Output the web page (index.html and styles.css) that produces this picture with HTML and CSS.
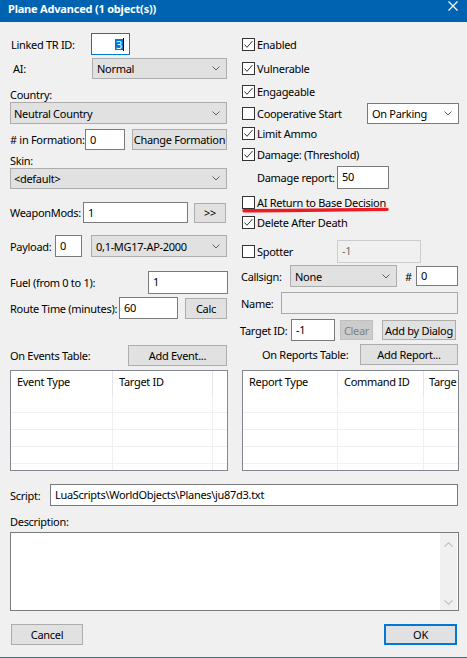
FILE: index.html
```html
<!DOCTYPE html>
<html>
<head>
<meta charset="utf-8">
<link rel="stylesheet" href="styles.css">
</head>
<body>
<div class="window">
  <div class="titlebar">
    <span class="title">Plane Advanced (1 object(s))</span>
    <svg class="close" viewBox="0 0 10 10"><path d="M0.5 0.5 L9.5 9.5 M9.5 0.5 L0.5 9.5" stroke="#fff" stroke-width="1.2" fill="none"/></svg>
  </div>

  <div class="main">
    <div class="col">
      <div class="row r-linked">
        <span class="lbl l-linked">Linked TR ID:</span>
        <div class="edit focus in-linked"><span class="hl">3</span><span class="caret"></span></div>
      </div>
      <div class="row r-ai">
        <span class="lbl l-ai">AI:</span>
        <div class="combo sel-ai"><span>Normal</span><svg class="chev" viewBox="0 0 8 5"><path d="M0.5 0.5 L4 4 L7.5 0.5" fill="none" stroke="#606060"/></svg></div>
      </div>
      <div class="cap cap-country">Country:</div>
      <div class="combo wide sel-country"><span>Neutral Country</span><svg class="chev" viewBox="0 0 8 5"><path d="M0.5 0.5 L4 4 L7.5 0.5" fill="none" stroke="#606060"/></svg></div>
      <div class="row r-form">
        <span class="lbl l-form"># in Formation:</span>
        <div class="edit in-form">0</div>
        <div class="btn btn-form">Change Formation</div>
      </div>
      <div class="cap cap-skin">Skin:</div>
      <div class="combo wide sel-skin"><span>&lt;default&gt;</span><svg class="chev" viewBox="0 0 8 5"><path d="M0.5 0.5 L4 4 L7.5 0.5" fill="none" stroke="#606060"/></svg></div>
      <div class="row r-wm">
        <span class="lbl l-wm">WeaponMods:</span>
        <div class="edit in-wm">1</div>
        <div class="btn btn-more">&gt;&gt;</div>
      </div>
      <div class="row r-pay">
        <span class="lbl l-pay">Payload:</span>
        <div class="edit in-pay">0</div>
        <div class="combo sel-pay"><span>0,1-MG17-AP-2000</span><svg class="chev" viewBox="0 0 8 5"><path d="M0.5 0.5 L4 4 L7.5 0.5" fill="none" stroke="#606060"/></svg></div>
      </div>
      <div class="row r-fuel">
        <span class="lbl grow">Fuel (from 0 to 1):</span>
        <div class="edit in-fuel">1</div>
      </div>
      <div class="row r-route">
        <span class="lbl l-route">Route Time (minutes):</span>
        <div class="edit in-route">60</div>
        <div class="btn btn-calc">Calc</div>
      </div>
      <div class="row r-events">
        <span class="lbl grow">On Events Table:</span>
        <div class="btn btn-addev">Add Event...</div>
      </div>
      <div class="table t-events">
        <div class="thead">
          <div class="th c-ev1">Event Type</div>
          <div class="th c-ev2">Target ID</div>
          <div class="th c-last"></div>
        </div>
        <div class="trow"><div class="td c-ev1"></div><div class="td c-ev2"></div><div class="td c-last"></div></div>
        <div class="trow"><div class="td c-ev1"></div><div class="td c-ev2"></div><div class="td c-last"></div></div>
        <div class="trow"><div class="td c-ev1"></div><div class="td c-ev2"></div><div class="td c-last"></div></div>
        <div class="trow"><div class="td c-ev1"></div><div class="td c-ev2"></div><div class="td c-last"></div></div>
        <div class="trow"><div class="td c-ev1"></div><div class="td c-ev2"></div><div class="td c-last"></div></div>
      </div>
    </div>

    <div class="col">
      <div class="cb-row cb1"><svg class="cbx" viewBox="0 0 13 13"><rect x="0.5" y="0.5" width="12" height="12" fill="#fff" stroke="#333"/><path d="M2.5 6.5 L5 9.3 L10.5 3" fill="none" stroke="#333"/></svg><span class="cbl">Enabled</span></div>
      <div class="cb-row cb2"><svg class="cbx" viewBox="0 0 13 13"><rect x="0.5" y="0.5" width="12" height="12" fill="#fff" stroke="#333"/><path d="M2.5 6.5 L5 9.3 L10.5 3" fill="none" stroke="#333"/></svg><span class="cbl">Vulnerable</span></div>
      <div class="cb-row cb3"><svg class="cbx" viewBox="0 0 13 13"><rect x="0.5" y="0.5" width="12" height="12" fill="#fff" stroke="#333"/><path d="M2.5 6.5 L5 9.3 L10.5 3" fill="none" stroke="#333"/></svg><span class="cbl">Engageable</span></div>
      <div class="cb-row r-coop"><svg class="cbx" viewBox="0 0 13 13"><rect x="0.5" y="0.5" width="12" height="12" fill="#fff" stroke="#333"/></svg><span class="cbl">Cooperative Start</span>
        <div class="combo white sel-coop"><span>On Parking</span><svg class="chev" viewBox="0 0 8 5"><path d="M0.5 0.5 L4 4 L7.5 0.5" fill="none" stroke="#606060"/></svg></div>
      </div>
      <div class="cb-row cb5"><svg class="cbx" viewBox="0 0 13 13"><rect x="0.5" y="0.5" width="12" height="12" fill="#fff" stroke="#333"/><path d="M2.5 6.5 L5 9.3 L10.5 3" fill="none" stroke="#333"/></svg><span class="cbl">Limit Ammo</span></div>
      <div class="cb-row cb6"><svg class="cbx" viewBox="0 0 13 13"><rect x="0.5" y="0.5" width="12" height="12" fill="#fff" stroke="#333"/><path d="M2.5 6.5 L5 9.3 L10.5 3" fill="none" stroke="#333"/></svg><span class="cbl">Damage: (Threshold)</span></div>
      <div class="row r-dmg">
        <span class="lbl l-dmg">Damage report:</span>
        <div class="edit in-dmg">50</div>
      </div>
      <div class="cb-row cb-ai">
        <svg class="cbx" viewBox="0 0 13 13"><rect x="0.5" y="0.5" width="12" height="12" fill="#fff" stroke="#333"/></svg><span class="cbl">AI Return to Base Decision</span>
        <svg class="redline" viewBox="0 0 150 8"><path d="M2 4.8 C 50 4.6, 100 4.2, 145 3.4" fill="none" stroke="#ec1c24" stroke-width="3.4" stroke-linecap="round"/></svg>
      </div>
      <div class="cb-row cb-del"><svg class="cbx" viewBox="0 0 13 13"><rect x="0.5" y="0.5" width="12" height="12" fill="#fff" stroke="#333"/><path d="M2.5 6.5 L5 9.3 L10.5 3" fill="none" stroke="#333"/></svg><span class="cbl">Delete After Death</span></div>
      <div class="cb-row r-spot">
        <span class="spot-l"><svg class="cbx" viewBox="0 0 13 13"><rect x="0.5" y="0.5" width="12" height="12" fill="#fff" stroke="#333"/></svg><span class="cbl">Spotter</span></span>
        <div class="edit disabled in-spot">-1</div>
      </div>
      <div class="row r-call">
        <span class="lbl l-call">Callsign:</span>
        <div class="combo sel-call"><span>None</span><svg class="chev" viewBox="0 0 8 5"><path d="M0.5 0.5 L4 4 L7.5 0.5" fill="none" stroke="#606060"/></svg></div>
        <span class="hash">#</span>
        <div class="edit in-num">0</div>
      </div>
      <div class="row r-name">
        <span class="lbl l-name">Name:</span>
        <div class="edit readonly in-name"></div>
      </div>
      <div class="row r-tid">
        <span class="lbl l-tid">Target ID:</span>
        <div class="edit in-tid">-1</div>
        <div class="btn dis btn-clear">Clear</div>
        <div class="btn btn-dialog">Add by Dialog</div>
      </div>
      <div class="row r-rep">
        <span class="lbl grow l-rep">On Reports Table:</span>
        <div class="btn btn-addrep">Add Report...</div>
      </div>
      <div class="table t-reports">
        <div class="thead">
          <div class="th c-rp1">Report Type</div>
          <div class="th c-rp2">Command ID</div>
          <div class="th c-last">Targe</div>
        </div>
        <div class="trow"><div class="td c-rp1"></div><div class="td c-rp2"></div><div class="td c-last"></div></div>
        <div class="trow"><div class="td c-rp1"></div><div class="td c-rp2"></div><div class="td c-last"></div></div>
        <div class="trow"><div class="td c-rp1"></div><div class="td c-rp2"></div><div class="td c-last"></div></div>
        <div class="trow"><div class="td c-rp1"></div><div class="td c-rp2"></div><div class="td c-last"></div></div>
        <div class="trow"><div class="td c-rp1"></div><div class="td c-rp2"></div><div class="td c-last"></div></div>
      </div>
    </div>
  </div>

  <div class="bottom">
    <div class="row r-script">
      <span class="lbl l-script">Script:</span>
      <div class="edit in-script">LuaScripts\WorldObjects\Planes\ju87d3.txt</div>
    </div>
    <div class="cap cap-desc">Description:</div>
    <div class="memo">
      <div class="memo-text"></div>
      <div class="vscroll">
        <svg class="sarrow" viewBox="0 0 9 5"><path d="M0.5 4.5 L4.5 0.8 L8.5 4.5" fill="none" stroke="#c0c0c0" stroke-width="1.2"/></svg>
        <svg class="sarrow" viewBox="0 0 9 5"><path d="M0.5 0.5 L4.5 4.2 L8.5 0.5" fill="none" stroke="#c0c0c0" stroke-width="1.2"/></svg>
      </div>
    </div>
    <div class="row r-btns">
      <div class="btn btn-cancel">Cancel</div>
      <div class="btn default btn-ok">OK</div>
    </div>
  </div>
</div>
</body>
</html>
```

FILE: styles.css
```css
* { box-sizing: border-box; }

body {
  margin: 0;
  width: 467px;
  height: 658px;
  overflow: hidden;
  background: #f0f0f0;
  font-family: "Noto Sans", "Open Sans", sans-serif;
  font-size: 11px;
  letter-spacing: -0.3px;
  color: #000;
}

.window {
  height: 658px;
  border-bottom: 1px solid #1e6fb9;
}

.titlebar {
  height: 22px;
  background: #0063b1;
  color: #fff;
  display: flex;
  justify-content: space-between;
  align-items: flex-start;
  padding: 0 9px 0 8px;
}
.title {
  font-weight: bold;
  font-size: 11px;
  letter-spacing: -0.2px;
  line-height: 18px;
}
.close {
  width: 10px;
  height: 10px;
  margin-top: 1px;
}

.main {
  display: grid;
  grid-template-columns: 218px 218px;
  column-gap: 13px;
  padding: 11px 0 0 10px;
}
.col {
  display: flex;
  flex-direction: column;
}

.row {
  display: flex;
  align-items: center;
}
.lbl {
  white-space: nowrap;
  flex: none;
}
.grow { flex: 1; }
.cap {
  height: 14px;
  line-height: 14px;
}

/* generic controls */
.edit {
  background: #fff;
  border: 1px solid #7a7a7a;
  height: 22px;
  line-height: 20px;
  padding: 0 4px;
  white-space: nowrap;
  overflow: hidden;
  flex: none;
}
.edit.focus {
  border-color: #0078d7;
  display: flex;
  justify-content: flex-end;
  align-items: center;
  padding-right: 5px;
}
.hl {
  background: #0078d7;
  color: #fff;
  line-height: 11px;
  padding: 0 1px;
}
.caret {
  width: 1px;
  height: 13px;
  background: #000;
}
.edit.disabled {
  background: #f0f0f0;
  border-color: #cccccc;
  color: #6d6d6d;
}
.edit.readonly {
  background: #f0f0f0;
  border-color: #a9a9a9;
}

.combo {
  background: #e1e1e1;
  border: 1px solid #adadad;
  height: 21px;
  display: flex;
  align-items: center;
  justify-content: space-between;
  padding: 0 6px 0 4px;
  white-space: nowrap;
  flex: none;
}
.combo.wide { padding-left: 3px; }
.combo.white {
  background: #fff;
  border-color: #7a7a7a;
}
.chev {
  width: 8px;
  height: 5px;
  flex: none;
}

.btn {
  background: #e1e1e1;
  border: 1px solid #adadad;
  height: 21px;
  display: flex;
  align-items: center;
  justify-content: center;
  white-space: nowrap;
  flex: none;
}
.btn.dis {
  background: #cccccc;
  border-color: #bfbfbf;
  color: #838383;
}
.btn.default {
  border: 2px solid #0078d7;
}

/* left column */
.r-linked { height: 22px; }
.l-linked { width: 81px; padding-left: 1px; }
.in-linked { width: 39px; }

.r-ai { height: 21px; margin-top: 3px; }
.l-ai { width: 82px; padding-left: 3px; }
.sel-ai { width: 135px; }

.cap-country { margin-top: 9px; }
.sel-country { width: 217px; height: 22px; }

.r-form { height: 21px; margin-top: 5px; }
.l-form { width: 75px; }
.in-form { width: 40px; height: 21px; }
.btn-form { width: 95px; margin-left: 7px; }

.cap-skin { margin-top: 4px; }
.sel-skin { width: 217px; }

.r-wm { height: 21px; margin-top: 13px; }
.l-wm { width: 73px; }
.in-wm { width: 105px; height: 21px; }
.btn-more { width: 32px; margin-left: 6px; height: 20px; }

.r-pay { height: 22px; margin-top: 12px; }
.l-pay { width: 45px; }
.in-pay { width: 27px; }
.sel-pay { width: 136px; height: 22px; margin-left: 9px; }

.r-fuel { height: 23px; margin-top: 14px; }
.in-fuel { width: 80px; height: 23px; }

.r-route { height: 22px; margin-top: 3px; }
.l-route { width: 109px; }
.in-route { width: 59px; }
.btn-calc { width: 42px; margin-left: 7px; }

.r-events { height: 21px; margin-top: 26px; }
.btn-addev { width: 99px; margin-right: 1px; }

/* tables */
.table {
  background: #fff;
  border: 1px solid #828790;
  height: 101px;
  overflow: hidden;
  flex: none;
}
.t-events { margin-top: 4px; width: 218px; }
.t-reports { margin-top: 5px; width: 217px; margin-left: 1px; }
.thead {
  display: flex;
  height: 25px;
}
.th {
  border-right: 1px solid #e5e5e5;
  line-height: 22px;
  padding-left: 6px;
  white-space: nowrap;
  overflow: hidden;
  flex: none;
}
.trow {
  display: flex;
  height: 17px;
  border-bottom: 1px solid #f0f0f0;
}
.td {
  border-right: 1px solid #f0f0f0;
  flex: none;
}
.c-ev1 { width: 102px; }
.c-ev2 { width: 100px; }
.c-rp1 { width: 95px; }
.c-rp2 { width: 86px; }
.c-last { flex: 1; border-right: none; padding-left: 5px; }

/* right column */
.cb-row {
  display: flex;
  align-items: center;
  height: 13px;
  position: relative;
}
.cbx {
  width: 13px;
  height: 13px;
  margin-left: 1px;
  flex: none;
}
.cbl {
  margin-left: 2px;
  white-space: nowrap;
}
.cb1 { margin-top: 5px; }
.cb2 { margin-top: 11px; }
.cb3 { margin-top: 10px; }
.r-coop { height: 21px; margin-top: 5px; }
.sel-coop { width: 92px; margin-left: auto; }
.cb5 { margin-top: 3px; }
.cb6 { margin-top: 8px; }

.r-dmg { height: 23px; margin-top: 5px; }
.l-dmg { width: 96px; padding-left: 16px; }
.in-dmg { width: 52px; height: 23px; }

.cb-ai { margin-top: 7px; }
.redline {
  position: absolute;
  left: 1px;
  top: 10px;
  width: 150px;
  height: 8px;
}
.cb-del { margin-top: 7px; }

.r-spot { height: 23px; margin-top: 11px; }
.spot-l {
  width: 96px;
  display: flex;
  align-items: center;
  flex: none;
}
.in-spot { width: 84px; height: 23px; }

.r-call { height: 22px; margin-top: 2px; }
.l-call { width: 49px; }
.sel-call { width: 107px; height: 22px; }
.hash { width: 11px; margin-left: 8px; }
.in-num { width: 42px; height: 20px; line-height: 18px; }

.r-name { height: 22px; margin-top: 5px; }
.l-name { width: 40px; }
.in-name { width: 177px; }

.r-tid { height: 22px; margin-top: 5px; }
.l-tid { width: 51px; margin-left: -1px; }
.in-tid { width: 44px; }
.btn-clear { width: 33px; height: 20px; margin-left: 5px; }
.btn-dialog { width: 74px; height: 20px; margin-left: 9px; }

.r-rep { height: 21px; margin-top: 3px; }
.l-rep { padding-left: 21px; }
.btn-addrep { width: 98px; margin-right: 1px; }

/* bottom */
.bottom {
  display: flex;
  flex-direction: column;
  padding: 0 10px;
}
.r-script { height: 22px; margin-top: 13px; }
.l-script { width: 40px; }
.in-script { width: 408px; }

.cap-desc { margin-top: 9px; }
.memo {
  margin-top: 3px;
  width: 449px;
  height: 79px;
  background: #fff;
  border: 1px solid #7a7a7a;
  display: flex;
  justify-content: space-between;
  padding: 0 1px 0 0;
}
.vscroll {
  width: 17px;
  background: #f0f0f0;
  display: flex;
  flex-direction: column;
  justify-content: space-between;
  align-items: center;
  padding: 9px 0 5px;
}
.sarrow {
  width: 9px;
  height: 5px;
}

.r-btns {
  height: 21px;
  margin-top: 13px;
  justify-content: space-between;
}
.btn-cancel { width: 72px; margin-left: 1px; }
.btn-ok { width: 73px; }
```
